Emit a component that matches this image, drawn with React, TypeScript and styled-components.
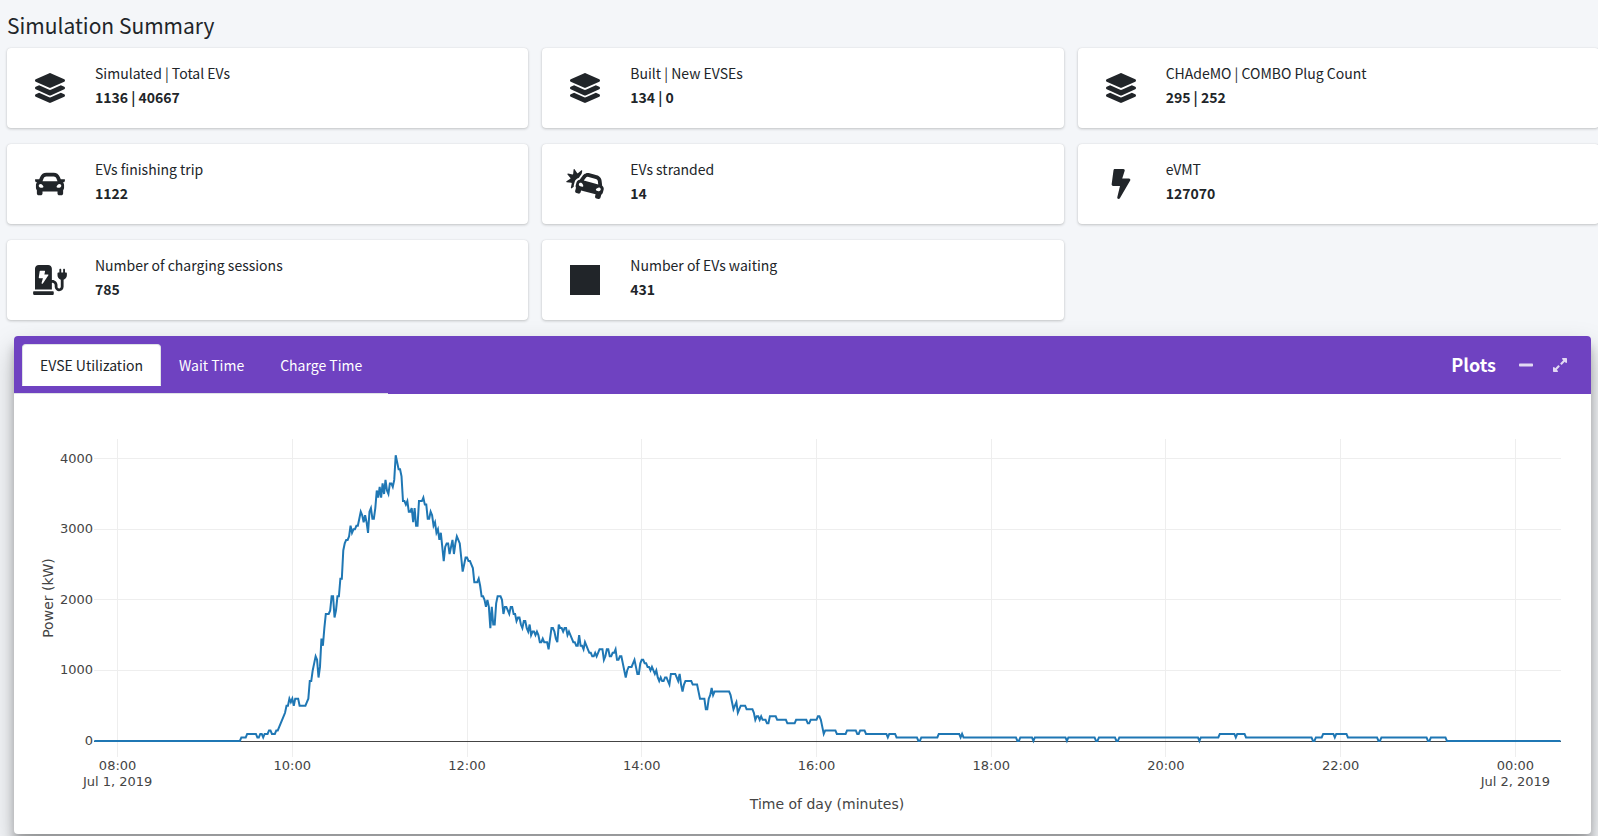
import React, { useState } from "react";
import styled, { createGlobalStyle } from "styled-components";
import type { IconType } from "react-icons";
import {
  FaBolt,
  FaCar,
  FaCarCrash,
  FaChargingStation,
  FaExpandAlt,
  FaLayerGroup,
  FaMinus,
  FaSquareFull,
} from "react-icons/fa";

const GlobalStyle = createGlobalStyle`
  *, *::before, *::after { box-sizing: border-box; }
  body {
    margin: 0;
    background: #f4f6f9;
    color: #212529;
    font-family: "Noto Sans CJK JP", "Noto Sans", sans-serif;
    font-size: 14px;
    line-height: 24px;
  }
`;

const Page = styled.main`
  min-height: 100vh;
  overflow-x: clip;
  padding-top: 9px;
`;

const Heading = styled.h1`
  margin: 0 7px 7px;
  font-size: 21px;
  font-weight: 400;
  line-height: 32px;
`;

const InfoGrid = styled.section`
  display: grid;
  grid-template-columns: repeat(3, minmax(0, 1fr));
  gap: 16px 14px;
  margin: 0 -1px 16px 7px;
`;

const InfoBox = styled.article`
  display: flex;
  min-height: 80px;
  padding: 8px;
  border-radius: 4px;
  background: #fff;
  box-shadow: 0 0 1px rgba(0, 0, 0, 0.125), 0 1px 3px rgba(0, 0, 0, 0.2);
`;

const InfoIcon = styled.span`
  display: flex;
  align-items: center;
  justify-content: center;
  width: 70px;

  svg {
    width: 38px;
    height: 30px;
  }
`;

const InfoContent = styled.div`
  display: flex;
  flex-direction: column;
  justify-content: center;
  padding: 0 10px 6px;
`;

const InfoValue = styled.strong`
  font-weight: 700;
`;

const Panel = styled.section`
  margin: 0 7px 0 14px;
  border-radius: 4px;
  background: #fff;
  box-shadow: 0 14px 28px rgba(0, 0, 0, 0.25), 0 10px 10px rgba(0, 0, 0, 0.22);
`;

const PanelHeader = styled.header`
  display: flex;
  align-items: center;
  justify-content: space-between;
  padding-right: 14px;
  border-radius: 4px 4px 0 0;
  background: #6f42c1;
  color: #fff;
`;

const Tabs = styled.div`
  display: flex;
  padding: 8px 8px 7px;
  border-bottom: 1px solid #dee2e6;
`;

const Tab = styled.button<{ $active: boolean }>`
  padding: 8px 17px;
  border: 1px solid;
  border-color: ${(p) => (p.$active ? "#dee2e6 #dee2e6 #fff" : "transparent")};
  border-radius: 4px 4px 0 0;
  background: ${(p) => (p.$active ? "#fff" : "transparent")};
  color: ${(p) => (p.$active ? "#212529" : "#fff")};
  font: inherit;
  cursor: pointer;
`;

const PanelTools = styled.div`
  display: flex;
  align-items: center;
`;

const PanelTitle = styled.h2`
  margin: 0 13px 0 0;
  padding-bottom: 3px;
  font-size: 18px;
  font-weight: 700;
  line-height: 24px;
`;

const ToolButton = styled.button`
  display: flex;
  justify-content: center;
  width: 34px;
  padding: 4px 0;
  border: 0;
  background: transparent;
  color: rgba(255, 255, 255, 0.8);
  font-size: 16px;
  cursor: pointer;
`;

const Plot = styled.svg`
  display: block;
  width: 100%;
  height: auto;
`;

const PlotText = styled.text<{ $title?: boolean }>`
  fill: #444;
  font-family: Verdana, "DejaVu Sans", sans-serif;
  font-size: ${(p) => (p.$title ? 14 : 13)}px;
`;

type Stat = { icon: IconType; label: string; value: string };

const stats: Stat[] = [
  { icon: FaLayerGroup, label: "Simulated | Total EVs", value: "1136 | 40667" },
  { icon: FaLayerGroup, label: "Built | New EVSEs", value: "134 | 0" },
  { icon: FaLayerGroup, label: "CHAdeMO | COMBO Plug Count", value: "295 | 252" },
  { icon: FaCar, label: "EVs finishing trip", value: "1122" },
  { icon: FaCarCrash, label: "EVs stranded", value: "14" },
  { icon: FaBolt, label: "eVMT", value: "127070" },
  { icon: FaChargingStation, label: "Number of charging sessions", value: "785" },
  { icon: FaSquareFull, label: "Number of EVs waiting", value: "431" },
];

const tabs = ["EVSE Utilization", "Wait Time", "Charge Time"];

// Power drawn, as [minutes after 08:00, kW].
const power: [number, number][] = [
  [-16, 0], [84, 0], [85, 50], [88, 50], [89, 100], [95, 100], [96, 50], [97, 50], [98, 100], [99, 100],
  [100, 50], [101, 100], [103, 100], [104, 150], [105, 150], [106, 100], [108, 100], [109, 150], [110, 150],
  [111, 200], [112, 250], [113, 300], [114, 350], [115, 400], [116, 500], [117, 500], [118, 600], [119, 550],
  [120, 600], [121, 500], [122, 600], [124, 600], [125, 500], [129, 500], [130, 550], [131, 600], [132, 850],
  [133, 850], [134, 1000], [135, 1100], [136, 1200], [137, 1150], [138, 900], [139, 1050], [140, 1450],
  [141, 1350], [142, 1600], [143, 1800], [145, 1800], [146, 1850], [147, 2050], [148, 2050], [149, 1750],
  [150, 1850], [151, 2050], [152, 2050], [153, 2300], [154, 2300], [155, 2700], [156, 2800], [157, 2850],
  [158, 2850], [159, 2900], [160, 3050], [161, 2950], [162, 3000], [163, 3000], [164, 3050], [165, 3050],
  [166, 3150], [167, 3250], [168, 3200], [169, 3100], [170, 3200], [171, 3100], [172, 2950], [173, 3250],
  [174, 3300], [175, 3150], [176, 3150], [177, 3300], [178, 3550], [179, 3450], [180, 3600], [181, 3450],
  [182, 3650], [183, 3500], [184, 3700], [185, 3550], [186, 3500], [187, 3650], [188, 3650], [189, 3600],
  [190, 3700], [191, 4050], [192, 3950], [193, 3850], [194, 3850], [195, 3750], [196, 3400], [197, 3400],
  [198, 3350], [199, 3400], [200, 3250], [201, 3250], [202, 3300], [203, 3100], [204, 3300], [205, 3050],
  [206, 3050], [207, 3400], [209, 3400], [210, 3450], [211, 3350], [212, 3350], [213, 3150], [214, 3150],
  [215, 3250], [216, 3200], [217, 3050], [218, 3100], [219, 2950], [220, 3000], [221, 2850], [222, 2950],
  [223, 2750], [224, 2550], [225, 2750], [226, 2800], [227, 2800], [228, 2650], [229, 2750], [230, 2850],
  [231, 2650], [232, 2800], [233, 2900], [234, 2850], [235, 2800], [236, 2600], [237, 2400], [238, 2500],
  [239, 2600], [240, 2600], [241, 2550], [242, 2550], [243, 2500], [244, 2450], [245, 2250], [247, 2250],
  [248, 2300], [249, 2200], [250, 2050], [251, 2050], [252, 2000], [253, 1900], [254, 2000], [255, 1900],
  [256, 1600], [257, 1900], [258, 1650], [259, 1650], [260, 1950], [261, 2050], [263, 2050], [264, 2000],
  [265, 1800], [266, 1900], [267, 1900], [268, 1850], [269, 1800], [270, 1900], [271, 1900], [272, 1800],
  [273, 1800], [274, 1700], [275, 1750], [276, 1750], [277, 1650], [278, 1600], [279, 1700], [280, 1700],
  [281, 1600], [282, 1550], [283, 1650], [284, 1500], [285, 1550], [286, 1550], [287, 1500], [288, 1550],
  [289, 1500], [290, 1400], [291, 1400], [292, 1450], [293, 1400], [295, 1400], [296, 1300], [297, 1450],
  [298, 1600], [299, 1600], [300, 1550], [301, 1450], [302, 1400], [303, 1650], [304, 1600], [305, 1600],
  [306, 1550], [307, 1600], [308, 1600], [309, 1500], [310, 1550], [311, 1500], [312, 1450], [313, 1400],
  [314, 1400], [315, 1350], [316, 1350], [317, 1500], [318, 1350], [319, 1350], [320, 1300], [321, 1400],
  [322, 1350], [323, 1300], [324, 1250], [325, 1250], [326, 1200], [327, 1200], [328, 1250], [329, 1200],
  [330, 1250], [331, 1300], [333, 1300], [334, 1150], [335, 1200], [336, 1300], [337, 1300], [338, 1200],
  [339, 1200], [340, 1250], [341, 1250], [342, 1300], [343, 1150], [344, 1150], [345, 1200], [346, 1200],
  [347, 1100], [348, 1000], [349, 900], [350, 1000], [351, 1050], [353, 1050], [354, 1100], [355, 1150],
  [356, 1050], [357, 950], [358, 950], [359, 1100], [360, 1150], [361, 1150], [362, 1100], [363, 1100],
  [364, 1050], [365, 1050], [366, 1000], [367, 1050], [368, 1000], [369, 950], [370, 1000], [371, 900],
  [372, 850], [373, 900], [374, 850], [375, 850], [376, 900], [377, 900], [378, 850], [379, 800], [380, 950],
  [383, 950], [384, 900], [385, 850], [386, 950], [387, 800], [388, 700], [389, 800], [390, 850], [394, 850],
  [395, 800], [398, 800], [399, 700], [400, 600], [403, 600], [404, 450], [405, 450], [406, 600], [407, 650],
  [408, 750], [409, 650], [410, 700], [420, 700], [421, 650], [422, 550], [423, 450], [424, 500], [425, 550],
  [426, 400], [427, 450], [428, 500], [431, 500], [432, 450], [436, 450], [437, 400], [438, 300], [439, 350],
  [440, 350], [441, 300], [442, 350], [443, 300], [445, 300], [446, 250], [447, 250], [448, 350], [452, 350],
  [453, 300], [459, 300], [460, 250], [465, 250], [466, 300], [473, 300], [474, 250], [475, 250], [476, 300],
  [480, 300], [481, 350], [482, 350], [483, 300], [484, 200], [485, 100], [486, 150], [493, 150], [494, 100],
  [500, 100], [501, 150], [507, 150], [508, 100], [509, 100], [510, 150], [513, 150], [514, 100], [528, 100],
  [529, 50], [530, 100], [534, 100], [535, 50], [549, 50], [550, 0], [551, 0], [552, 50], [563, 50], [564, 100],
  [578, 100], [579, 50], [580, 100], [581, 50], [617, 50], [618, 0], [619, 0], [620, 50], [628, 50], [629, 0],
  [630, 50], [651, 50], [652, 0], [653, 50], [671, 50], [672, 0], [673, 0], [674, 50], [685, 50], [686, 0],
  [687, 0], [688, 50], [742, 50], [743, 0], [744, 50], [756, 50], [757, 100], [767, 100], [768, 50],
  [769, 100], [774, 100], [775, 50], [820, 50], [821, 0], [822, 0], [823, 50], [827, 50], [828, 100],
  [835, 100], [836, 50], [837, 100], [844, 100], [845, 50], [865, 50], [866, 0], [867, 0], [868, 50],
  [899, 50], [900, 0], [901, 0], [902, 50], [912, 50], [913, 0], [991, 0],
];

const timeTicks = [
  { minute: 0, label: "08:00", date: "Jul 1, 2019" },
  { minute: 120, label: "10:00" },
  { minute: 240, label: "12:00" },
  { minute: 360, label: "14:00" },
  { minute: 480, label: "16:00" },
  { minute: 600, label: "18:00" },
  { minute: 720, label: "20:00" },
  { minute: 840, label: "22:00" },
  { minute: 960, label: "00:00", date: "Jul 2, 2019" },
];

const powerTicks = [0, 1000, 2000, 3000, 4000];

const area = { left: 80, right: 1547, top: 45, bottom: 363 };
const xOf = (minute: number) => 103.6 + minute * 1.456;
const yOf = (kw: number) => 347 - kw * 0.07057;
// Grid lines sit on the middle of a pixel so that they stay sharp.
const crisp = (v: number) => Math.floor(v) + 0.5;

function UtilizationPlot() {
  return (
    <Plot viewBox="0 0 1577 440" role="img" aria-label="Power (kW) by time of day">
      <g stroke="#eee" strokeWidth="1">
        {timeTicks.map((t) => (
          <line key={t.minute} x1={crisp(xOf(t.minute))} x2={crisp(xOf(t.minute))} y1={area.top} y2={area.bottom} />
        ))}
        {powerTicks.slice(1).map((kw) => (
          <line key={kw} x1={area.left} x2={area.right} y1={crisp(yOf(kw))} y2={crisp(yOf(kw))} />
        ))}
      </g>
      <line x1={area.left} x2={area.right} y1={crisp(yOf(0))} y2={crisp(yOf(0))} stroke="#444" />
      <polyline
        points={power.map(([m, kw]) => `${xOf(m).toFixed(2)},${yOf(kw).toFixed(2)}`).join(" ")}
        fill="none"
        stroke="#1f77b4"
        strokeWidth="2"
      />
      {timeTicks.map((t) => (
        <g key={t.minute} textAnchor="middle">
          <PlotText x={xOf(t.minute)} y={376}>{t.label}</PlotText>
          {t.date && <PlotText x={xOf(t.minute)} y={392}>{t.date}</PlotText>}
        </g>
      ))}
      {powerTicks.map((kw) => (
        <PlotText key={kw} x={area.left - 1} y={yOf(kw) + 4} textAnchor="end">{kw}</PlotText>
      ))}
      <PlotText $title x={813} y={415} textAnchor="middle">Time of day (minutes)</PlotText>
      <PlotText $title transform="translate(39 204) rotate(-90)" textAnchor="middle">Power (kW)</PlotText>
    </Plot>
  );
}

export default function App() {
  const [active, setActive] = useState(tabs[0]);

  return (
    <>
      <GlobalStyle />
      <Page>
        <Heading>Simulation Summary</Heading>
        <InfoGrid>
          {stats.map(({ icon: Icon, label, value }) => (
            <InfoBox key={label}>
              <InfoIcon><Icon aria-hidden /></InfoIcon>
              <InfoContent>
                <span>{label}</span>
                <InfoValue>{value}</InfoValue>
              </InfoContent>
            </InfoBox>
          ))}
        </InfoGrid>
        <Panel>
          <PanelHeader>
            <Tabs role="tablist">
              {tabs.map((name) => (
                <Tab
                  key={name}
                  type="button"
                  role="tab"
                  aria-selected={name === active}
                  $active={name === active}
                  onClick={() => setActive(name)}
                >
                  {name}
                </Tab>
              ))}
            </Tabs>
            <PanelTools>
              <PanelTitle>Plots</PanelTitle>
              <ToolButton type="button" aria-label="Collapse"><FaMinus /></ToolButton>
              <ToolButton type="button" aria-label="Maximize"><FaExpandAlt /></ToolButton>
            </PanelTools>
          </PanelHeader>
          <UtilizationPlot />
        </Panel>
      </Page>
    </>
  );
}
